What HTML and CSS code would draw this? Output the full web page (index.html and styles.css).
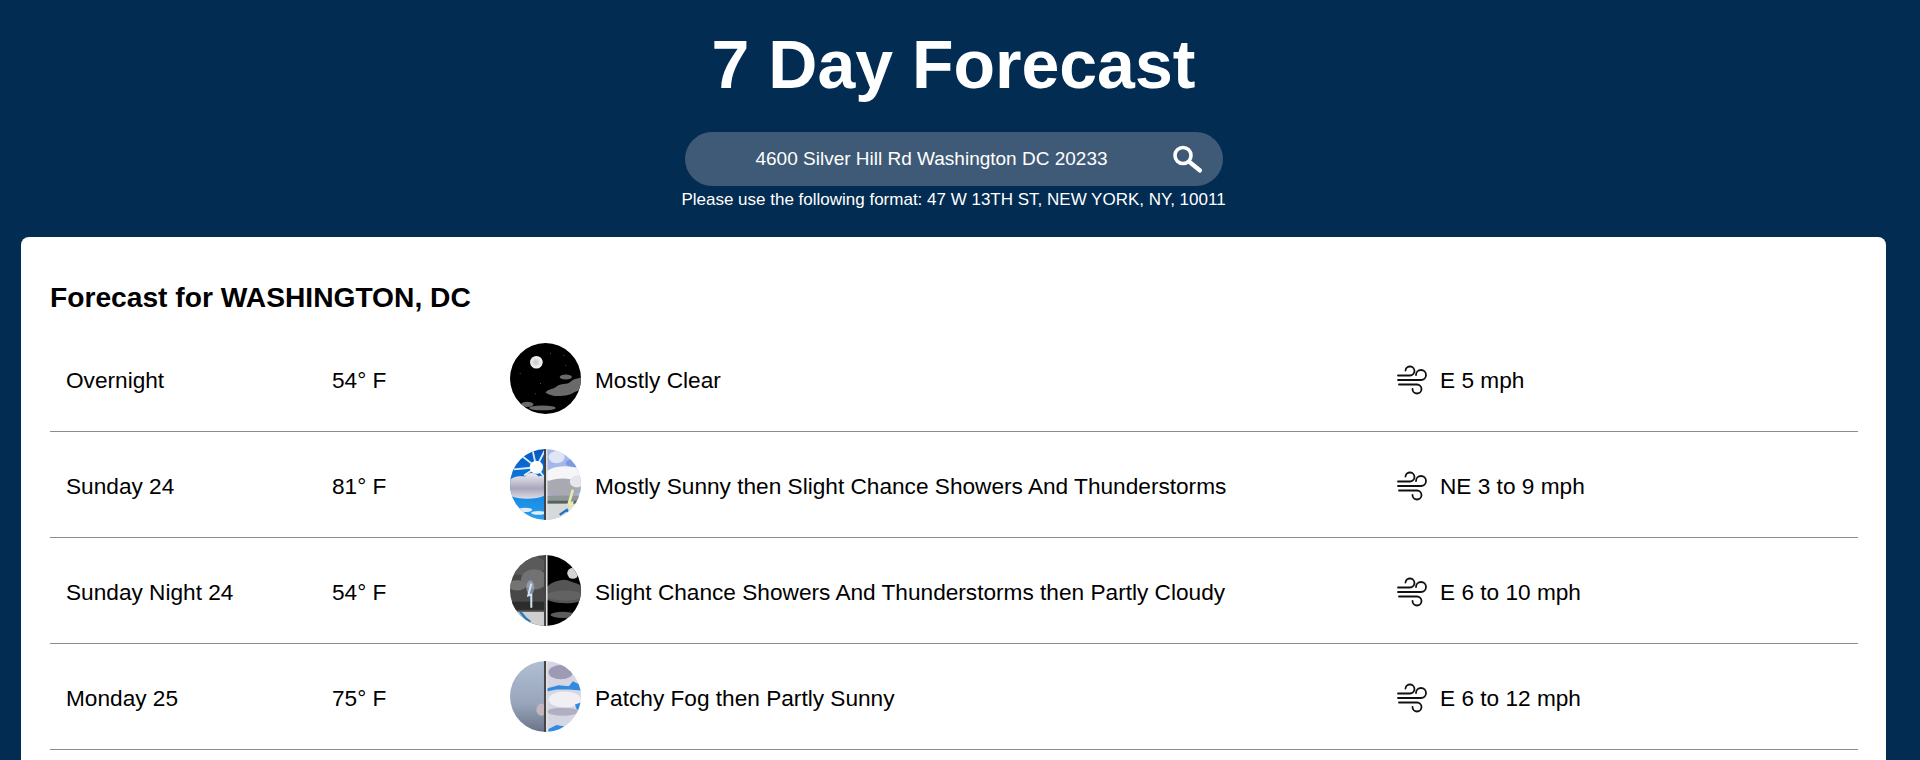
FILE: index.html
```html
<!DOCTYPE html>
<html lang="en">
<head>
  <meta charset="UTF-8">
  <title>7 Day Forecast</title>
  <link rel="stylesheet" href="styles.css">
</head>
<body>
  <header class="top">
    <h1 class="title">7 Day Forecast</h1>
    <form class="search">
      <span class="search-text">4600 Silver Hill Rd Washington DC 20233</span>
      <svg class="search-icon" viewBox="0 0 40 40" fill="none" stroke="#fff" stroke-linecap="round">
        <circle cx="17" cy="16.5" r="8" stroke-width="3.6"/>
        <path d="M23.5 23 L34 31.5" stroke-width="4.2"/>
      </svg>
    </form>
    <p class="hint">Please use the following format: 47 W 13TH ST, NEW YORK, NY, 10011</p>
  </header>

  <main class="card">
    <h2 class="place">Forecast for WASHINGTON, DC</h2>

    <div class="row">
      <div class="day">Overnight</div>
      <div class="temp">54° F</div>
      <svg class="sky" viewBox="0 0 70 70">
        <rect width="70" height="70" fill="#000"/>
        <g fill="#666">
          <circle cx="40" cy="10" r=".5"/><circle cx="53" cy="12" r=".5"/><circle cx="10" cy="30" r=".5"/>
          <circle cx="30" cy="40" r=".5"/><circle cx="55" cy="22" r=".5"/><circle cx="25" cy="50" r=".5"/>
        </g>
        <radialGradient id="moon1" cx=".45" cy=".5" r=".6">
          <stop offset="0" stop-color="#c4c4c4"/><stop offset=".6" stop-color="#ececec"/><stop offset="1" stop-color="#fff"/>
        </radialGradient>
        <circle cx="26" cy="19" r="6.2" fill="url(#moon1)"/>
        <g class="soft" fill="#6a6a6a">
          <path d="M35 49 C38 45 42 46 46 43 C50 39 56 42 60 38 C63 35 67 35 70 34 L70 46 C64 47 60 52 52 52 C46 53 40 52 35 49 Z"/>
          <ellipse cx="55" cy="33.5" rx="6" ry="2.4"/>
          <ellipse cx="17" cy="60.5" rx="6" ry="2.6"/>
          <ellipse cx="32" cy="64" rx="13" ry="2.4"/>
        </g>
      </svg>
      <div class="cond">Mostly Clear</div>
      <svg class="wind-icon" viewBox="0 0 40 40" fill="none" stroke="#111" stroke-width="1.8" stroke-linecap="round">
        <path d="M7 14.5 H19 a4.5 4.5 0 1 0 -4.5 -5"/>
        <path d="M7 19 H30 a5 5 0 1 0 -5 -5"/>
        <path d="M8 23.5 H26 a4.5 4.5 0 1 1 -4.5 4.5"/>
      </svg>
      <div class="wind">E 5 mph</div>
    </div>

    <div class="row">
      <div class="day">Sunday 24</div>
      <div class="temp">81° F</div>
      <svg class="sky" viewBox="0 0 70 70">
        <linearGradient id="blue2" x1="0" y1="0" x2="0" y2="1">
          <stop offset="0" stop-color="#0657bd"/><stop offset=".6" stop-color="#1187e4"/><stop offset="1" stop-color="#2a9fec"/>
        </linearGradient>
        <linearGradient id="cloud2" x1="0" y1="0" x2="0" y2="1">
          <stop offset="0" stop-color="#efedf4"/><stop offset=".6" stop-color="#aaa6bc"/><stop offset="1" stop-color="#dcdbe6"/>
        </linearGradient>
        <rect width="34" height="70" fill="url(#blue2)"/>
        <g class="soft">
          <path d="M26 18 L8 4 M26 18 L34 2 M26 18 L34 28 M26 18 L4 20 M26 18 L22 0 M26 18 L14 26" stroke="#d8ecff" stroke-width="1.8"/>
          <circle cx="26" cy="18" r="6.5" fill="#fff"/>
          <path d="M0 30 C6 26 12 27 15 27 C18 22 26 23 28 27 C31 26 33 27 34 28 L34 46 C26 50 8 50 0 46 Z" fill="url(#cloud2)"/>
          <ellipse cx="15" cy="60" rx="7" ry="2.2" fill="#e4ebf6"/>
          <ellipse cx="28" cy="63" rx="7" ry="1.8" fill="#e4ebf6"/>
        </g>
        <rect x="36" width="34" height="70" fill="#a3b8e8"/>
        <g class="soft">
          <ellipse cx="46" cy="8" rx="8" ry="6" fill="#dfe5f5"/>
          <ellipse cx="62" cy="14" rx="7" ry="4" fill="#7a9be2"/>
          <ellipse cx="54" cy="26" rx="20" ry="9" fill="#f6f6f8"/>
          <ellipse cx="52" cy="38" rx="20" ry="9" fill="#a9a9b2"/>
          <ellipse cx="66" cy="32" rx="7" ry="6" fill="#e6e6ec"/>
          <rect x="36" y="46" width="34" height="7" fill="#8f979a"/>
        </g>
        <rect x="36" y="51" width="34" height="3" fill="#566458"/>
        <rect x="36" y="54" width="34" height="16" fill="#d6d9db"/>
        <g class="soft">
          <path d="M62 40 L58 54 L61 53 L59 60" stroke="#e8eab0" stroke-width="2.6" fill="none"/>
          <path d="M49 65 L56 60 L58 64" stroke="#1f6fc0" stroke-width="2.2" fill="none"/>
        </g>
        <rect x="33.5" width="2" height="70" fill="#444"/>
        <rect x="35.5" width="1.5" height="70" fill="#e2e2e2"/>
      </svg>
      <div class="cond">Mostly Sunny then Slight Chance Showers And Thunderstorms</div>
      <svg class="wind-icon" viewBox="0 0 40 40" fill="none" stroke="#111" stroke-width="1.8" stroke-linecap="round">
        <path d="M7 14.5 H19 a4.5 4.5 0 1 0 -4.5 -5"/>
        <path d="M7 19 H30 a5 5 0 1 0 -5 -5"/>
        <path d="M8 23.5 H26 a4.5 4.5 0 1 1 -4.5 4.5"/>
      </svg>
      <div class="wind">NE 3 to 9 mph</div>
    </div>

    <div class="row">
      <div class="day">Sunday Night 24</div>
      <div class="temp">54° F</div>
      <svg class="sky" viewBox="0 0 70 70">
        <rect width="34" height="70" fill="#484848"/>
        <g class="soft">
          <ellipse cx="14" cy="10" rx="22" ry="10" fill="#5a5a5a"/>
          <ellipse cx="24" cy="24" rx="13" ry="10" fill="#727272"/>
          <ellipse cx="7" cy="30" rx="9" ry="5" fill="#747474"/>
          <rect y="46" width="34" height="8" fill="#2c2c2c"/>
          <ellipse cx="20" cy="32" rx="4" ry="7" fill="#a4b4cc" opacity=".6"/>
          <path d="M21 28 L18 40 L21 39 L21 52" stroke="#d2e2f8" stroke-width="2" fill="none"/>
        </g>
        <rect y="56" width="34" height="14" fill="#cfcfcf"/>
        <path class="soft" d="M10 56 L15 62 L20 66" stroke="#2a78c0" stroke-width="2.4" fill="none"/>
        <rect x="36" width="34" height="70" fill="#000"/>
        <circle cx="62" cy="18" r="5.5" fill="#d4d4d4"/>
        <g class="soft">
          <path d="M36 32 C42 26 46 26 50 25 C56 23 60 27 66 28 L70 30 L70 45 C60 49 46 48 36 44 Z" fill="#555"/>
          <ellipse cx="54" cy="40" rx="18" ry="5" fill="#626262"/>
          <ellipse cx="52" cy="59" rx="12" ry="3" fill="#5c5c5c"/>
        </g>
        <rect x="33.5" width="2" height="70" fill="#444"/>
        <rect x="35.5" width="1.5" height="70" fill="#e2e2e2"/>
      </svg>
      <div class="cond">Slight Chance Showers And Thunderstorms then Partly Cloudy</div>
      <svg class="wind-icon" viewBox="0 0 40 40" fill="none" stroke="#111" stroke-width="1.8" stroke-linecap="round">
        <path d="M7 14.5 H19 a4.5 4.5 0 1 0 -4.5 -5"/>
        <path d="M7 19 H30 a5 5 0 1 0 -5 -5"/>
        <path d="M8 23.5 H26 a4.5 4.5 0 1 1 -4.5 4.5"/>
      </svg>
      <div class="wind">E 6 to 10 mph</div>
    </div>

    <div class="row">
      <div class="day">Monday 25</div>
      <div class="temp">75° F</div>
      <svg class="sky" viewBox="0 0 70 70">
        <linearGradient id="fog4" x1="0" y1="0" x2="0" y2="1">
          <stop offset="0" stop-color="#b0bfd4"/><stop offset=".6" stop-color="#98a5ba"/><stop offset="1" stop-color="#6a7488"/>
        </linearGradient>
        <rect width="34" height="70" fill="url(#fog4)"/>
        <ellipse class="soft" cx="31" cy="48" rx="5" ry="6" fill="#c4b6bc"/>
        <rect x="36" width="34" height="70" fill="#d6d5e2"/>
        <g class="soft">
          <ellipse cx="50" cy="11" rx="12" ry="7" fill="#9c9ab4"/>
          <path d="M36 27 L48 24 L58 25 L62 20 L70 24 L70 29 L58 28 L46 28 L36 30 Z" fill="#2f8ae0"/>
          <ellipse cx="54" cy="38" rx="16" ry="8" fill="#f0eff4"/>
          <ellipse cx="52" cy="50" rx="15" ry="4" fill="#b0afc2"/>
          <path d="M64 43 L70 41 L70 48 L66 48 Z" fill="#2f8ae0"/>
          <path d="M38 67 L46 63 L56 65 L52 70 L38 70 Z" fill="#2f8ae0"/>
        </g>
        <rect x="33.5" width="2" height="70" fill="#444"/>
        <rect x="35.5" width="1.5" height="70" fill="#e2e2e2"/>
      </svg>
      <div class="cond">Patchy Fog then Partly Sunny</div>
      <svg class="wind-icon" viewBox="0 0 40 40" fill="none" stroke="#111" stroke-width="1.8" stroke-linecap="round">
        <path d="M7 14.5 H19 a4.5 4.5 0 1 0 -4.5 -5"/>
        <path d="M7 19 H30 a5 5 0 1 0 -5 -5"/>
        <path d="M8 23.5 H26 a4.5 4.5 0 1 1 -4.5 4.5"/>
      </svg>
      <div class="wind">E 6 to 12 mph</div>
    </div>
  </main>
</body>
</html>
```

FILE: styles.css
```css
html, body {
  height: 100%;
  overflow: hidden;
}
body {
  display: flex;
  flex-direction: column;
  margin: 0;
  background: #022c52;
  color: #000;
  font-family: "Liberation Sans", Arial, sans-serif;
}
.top {
  display: flex;
  flex-direction: column;
  align-items: center;
  height: 237px;
  padding-right: 13px;
  color: #fff;
}
.title {
  margin: 24px 0 27px;
  font-size: 68px;
  line-height: 81px;
  font-weight: bold;
}
.search {
  display: flex;
  align-items: center;
  width: 538px;
  height: 54px;
  border-radius: 27px;
  background: #3f5a76;
}
.search-text {
  flex: 1;
  padding-left: 13px;
  text-align: center;
  font-size: 19px;
}
.search-icon {
  width: 40px;
  height: 40px;
  margin-right: 17px;
}
.hint {
  margin: 4px 0 0;
  font-size: 17px;
  line-height: 20px;
}
.card {
  flex: 1;
  margin: 0 34px 0 21px;
  padding: 0 28px 0 29px;
  border-radius: 8px 8px 0 0;
  background: #fff;
}
.place {
  margin: 0;
  padding-top: 44px;
  height: 89px;
  box-sizing: border-box;
  font-size: 28.2px;
  line-height: 32px;
}
.row {
  display: grid;
  grid-template-columns: 282px 178px 70px 816px 44px 1fr;
  align-items: center;
  height: 106px;
  box-sizing: border-box;
  border-bottom: 1px solid #8c8c8c;
  font-size: 22.65px;
}
.day, .temp, .cond, .wind {
  padding-top: 4px;
}
.day {
  padding-left: 16px;
}
.sky {
  display: block;
  width: 71px;
  height: 71px;
  border-radius: 50%;
}
.soft {
  filter: blur(.6px);
}
.cond {
  padding-left: 15px;
}
.wind-icon {
  display: block;
  width: 40px;
  height: 40px;
  margin: 4px 0 0 -5px;
}
```
